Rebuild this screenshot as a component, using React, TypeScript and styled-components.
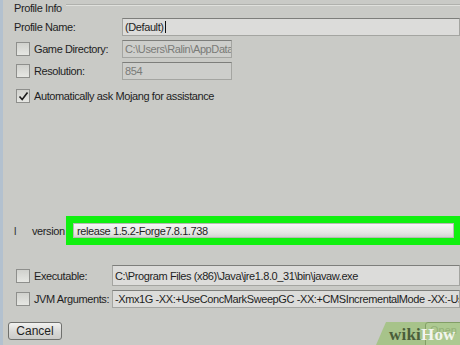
import React from "react";
import styled, { createGlobalStyle } from "styled-components";

const Global = createGlobalStyle`
  html, body { margin: 0; padding: 0; background: #c9cac6; }
  body { font-family: "Liberation Sans", Arial, sans-serif; }
`;

const Window = styled.div`
  position: relative;
  width: 460px;
  height: 345px;
  overflow: hidden;
  background: #c9cac6;
  border-left: 3px solid #b3c1cf;
  box-sizing: border-box;
  display: flex;
  flex-direction: column;
  font-size: 11px;
  letter-spacing: -0.4px;
  color: #1e1e1e;
`;

const Group = styled.div`
  display: flex;
  flex-direction: column;
  padding: 0 0 0 11px;
`;

const GroupTitle = styled.div`
  display: flex;
  align-items: center;
  height: 15px;
  gap: 4px;
  &::after {
    content: "";
    flex: 1;
    border-top: 1px solid #b0b1ad;
    border-bottom: 1px solid #e0e1dd;
    margin-top: -6px;
  }
`;

const Row = styled.div<{ $h: number; $mt: number }>`
  display: flex;
  align-items: center;
  height: ${(p) => p.$h}px;
  margin-top: ${(p) => p.$mt}px;
`;

const Label = styled.span<{ $w: number }>`
  display: flex;
  align-items: center;
  gap: 4px;
  width: ${(p) => p.$w}px;
  flex: none;
  white-space: nowrap;
`;

const Box = styled.span`
  width: 12px;
  height: 12px;
  margin-left: 2px;
  flex: none;
  border: 1px solid #8e8f8c;
  background: linear-gradient(#d0d1cd, #e6e7e3);
  display: flex;
  align-items: center;
  justify-content: center;
  box-sizing: content-box;
`;

const Field = styled.div<{ $w?: number; $disabled?: boolean; $h: number }>`
  height: ${(p) => p.$h}px;
  ${(p) => (p.$w ? `width: ${p.$w}px;` : "flex: 1;")}
  box-sizing: border-box;
  border: 1px solid #a4a5a1;
  border-top-color: #7d7e7b;
  background: ${(p) => (p.$disabled ? "#cdcecb" : "#dcdcda")};
  color: ${(p) => (p.$disabled ? "#7a7b78" : "#1e1e1e")};
  padding-left: 2px;
  display: flex;
  align-items: center;
  white-space: nowrap;
  overflow: hidden;
`;

const Caret = styled.span`
  display: inline-block;
  width: 1px;
  height: 12px;
  background: #111;
  margin-left: 1px;
`;

const Spacer = styled.div`
  flex: 1;
`;

const Highlight = styled.div`
  flex: 1;
  height: 29px;
  box-sizing: border-box;
  border: 7px solid #10f010;
  border-right-width: 6px;
  background: #10f010;
  display: flex;
`;

const VersionField = styled.div`
  flex: 1;
  box-sizing: border-box;
  border: 1px solid #b8b9b5;
  background: linear-gradient(#f6f6f6, #e4e4e2 70%, #d4d4d2);
  padding-left: 3px;
  display: flex;
  align-items: center;
  white-space: nowrap;
  overflow: hidden;
`;

const Tick = styled.span`
  width: 18px;
  color: #333;
  flex: none;
`;

const Footer = styled.div`
  display: flex;
  align-items: center;
  height: 18px;
  margin-top: 14px;
  margin-bottom: 5px;
  padding-left: 5px;
`;

const Button = styled.div`
  width: 54px;
  height: 18px;
  box-sizing: border-box;
  border: 1px solid #6f706d;
  border-radius: 3px;
  background: linear-gradient(#f2f2f0, #d8d8d6 55%, #cacac8);
  display: flex;
  align-items: center;
  justify-content: center;
  font-size: 12px;
  letter-spacing: 0;
`;

const Watermark = styled.div`
  position: absolute;
  left: 373px;
  top: 322px;
  width: 87px;
  height: 23px;
  background: rgba(152, 192, 112, 0.7);
  clip-path: polygon(10px 0, 100% 0, 100% 100%, 0 100%);
  display: flex;
  align-items: center;
  padding: 3px 0 0 13px;
  box-sizing: border-box;
  font-family: "Liberation Serif", "DejaVu Serif", serif;
  font-weight: bold;
  font-size: 17px;
  letter-spacing: 0.2px;
  color: #4a5e3a;
  white-space: nowrap;
`;

const OpenBtn = styled.div`
  position: absolute;
  left: 422px;
  top: 322px;
  width: 44px;
  height: 26px;
  border: 1px solid #4f504d;
  border-radius: 3px;
  background: #dededc;
  color: #8a8a88;
  font-size: 11px;
  letter-spacing: 0;
  padding: 1px 0 0 4px;
  box-sizing: border-box;
`;

const How = styled.span`
  color: #f2f5ee;
`;

const Check = () => (
  <svg width="11" height="11" viewBox="0 0 11 11">
    <path d="M1.5 5.5 L4.2 8.6 L9.5 1.5" fill="none" stroke="#1b1b1b" strokeWidth="1.6" />
  </svg>
);

export default function App() {
  return (
    <>
      <Global />
      <Window>
        <Group>
          <GroupTitle>Profile Info</GroupTitle>
          <Row $h={18} $mt={3}>
            <Label $w={108}>Profile Name:</Label>
            <Field $h={18}>
              (Default)
              <Caret />
            </Field>
          </Row>
          <Row $h={18} $mt={4}>
            <Label $w={108}>
              <Box />
              Game Directory:
            </Label>
            <Field $h={18} $w={110} $disabled>
              C:\Users\Ralin\AppData
            </Field>
          </Row>
          <Row $h={18} $mt={4}>
            <Label $w={108}>
              <Box />
              Resolution:
            </Label>
            <Field $h={18} $w={110} $disabled>
              854
            </Field>
          </Row>
          <Row $h={18} $mt={7}>
            <Label $w={300}>
              <Box>
                <Check />
              </Box>
              Automatically ask Mojang for assistance
            </Label>
          </Row>
        </Group>
        <Spacer />
        <Group>
          <Row $h={29} $mt={0}>
            <Tick>l</Tick>
            <Label $w={34}>version</Label>
            <Highlight>
              <VersionField>release 1.5.2-Forge7.8.1.738</VersionField>
            </Highlight>
          </Row>
          <Row $h={21} $mt={20}>
            <Label $w={98}>
              <Box />
              Executable:
            </Label>
            <Field $h={21}>C:\Program Files (x86)\Java\jre1.8.0_31\bin\javaw.exe</Field>
          </Row>
          <Row $h={18} $mt={4}>
            <Label $w={98}>
              <Box />
              JVM Arguments:
            </Label>
            <Field $h={18}>
              -Xmx1G -XX:+UseConcMarkSweepGC -XX:+CMSIncrementalMode -XX:-UseA
            </Field>
          </Row>
        </Group>
        <Footer>
          <Button>Cancel</Button>
        </Footer>
        <OpenBtn>Open</OpenBtn>
        <Watermark>
          wiki<How>How</How>
        </Watermark>
      </Window>
    </>
  );
}
